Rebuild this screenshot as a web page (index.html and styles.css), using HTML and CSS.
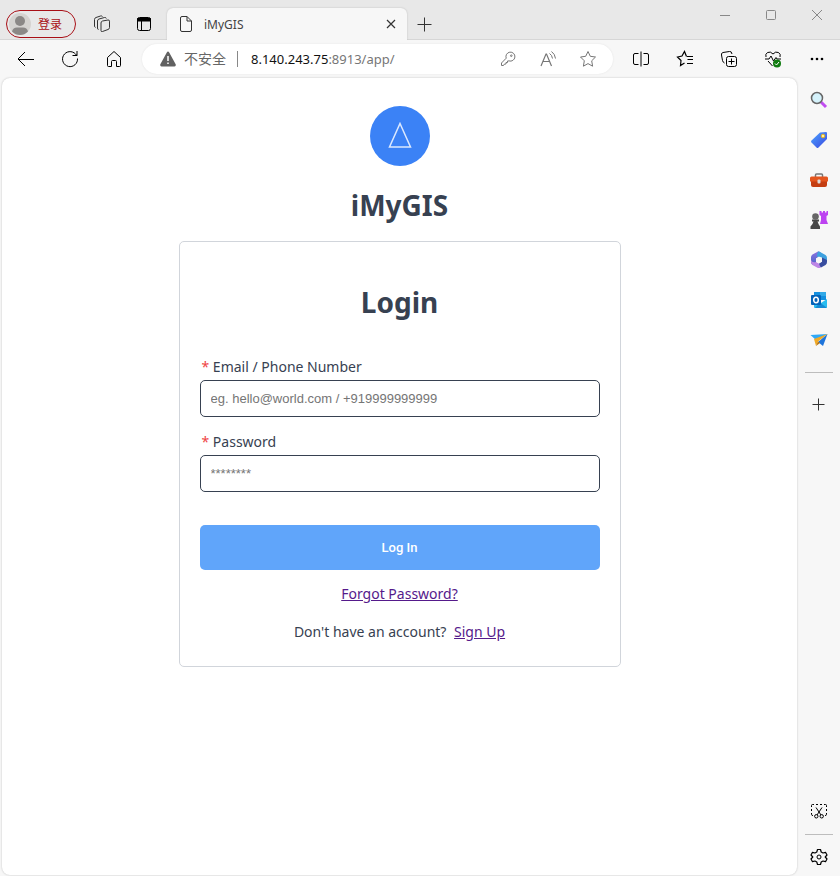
FILE: index.html
```html
<!DOCTYPE html>
<html lang="en">
<head>
<meta charset="utf-8">
<meta name="viewport" content="width=device-width, initial-scale=1">
<title>iMyGIS</title>
<link rel="stylesheet" href="styles.css">
</head>
<body>
<div class="window">
  <header class="titlebar">
    <button class="profile" type="button">
      <svg width="22" height="22" viewBox="0 0 22 22"><circle cx="11" cy="11" r="11" fill="#d5d3d0"/><circle cx="11" cy="8" r="5" fill="#8b8886"/><path d="M3 18.500Q4 14.500 8 14.500H14Q18 14.500 19 18.500Q15.500 22 11 22T3 18.500Z" fill="#8b8886"/></svg>
      <span>登录</span>
    </button>
    <button class="title-btn" type="button" aria-label="Workspaces">
      <svg class="line" width="18" height="18" viewBox="0 0 18 18"><path d="M9.500 6L15 5Q16.500 4.800 16.500 6.200V12.500Q16.500 14 15 14.500L9.500 16.500Q8 17 8 15.500V8Q8 6.400 9.500 6ZM5.500 14.500Q4.500 14.500 4.500 13V6Q4.500 4.500 6 4L11.500 2.500Q13 2.200 13.300 3.500M2.500 12.500Q1.500 12 1.500 11V4.500Q1.500 3 3 2.500L7.500 1Q9 .7 9.500 1.500"/></svg>
    </button>
    <button class="title-btn" type="button" aria-label="Tab actions">
      <svg class="line dark" width="16" height="16" viewBox="0 0 16 16"><rect x="1.500" y="1.500" width="13" height="13" rx="2"/><path d="M1.500 2.500H14.500V5H1.500Z" fill="#000"/><path d="M5.500 5V14.500"/></svg>
    </button>
    <div class="tab">
      <svg class="line" width="14" height="18" viewBox="0 0 14 18"><path d="M3 1.500H8L12.500 6V15Q12.500 16.500 11 16.500H3Q1.500 16.500 1.500 15V3Q1.500 1.500 3 1.500ZM8 1.500V6H12.500"/></svg>
      <span class="tab-title">iMyGIS</span>
      <button type="button" aria-label="Close tab"><svg class="line" width="10" height="10" viewBox="0 0 10 10"><path d="M1 1L9 9M9 1L1 9" stroke-width="1.200"/></svg></button>
    </div>
    <button class="new-tab" type="button" aria-label="New tab"><svg class="line" width="15" height="15" viewBox="0 0 15 15"><path d="M7.500 .5V14.500M.5 7.500H14.500"/></svg></button>
    <div class="controls">
      <button type="button" aria-label="Minimize"><svg class="line" width="12" height="12" viewBox="0 0 12 12"><path d="M1 6.500H11"/></svg></button>
      <button type="button" aria-label="Maximize"><svg class="line" width="12" height="12" viewBox="0 0 12 12"><rect x="1.500" y="1.500" width="9" height="9" rx="1"/></svg></button>
      <button type="button" aria-label="Close"><svg class="line" width="12" height="12" viewBox="0 0 12 12"><path d="M1 1L11 11M11 1L1 11"/></svg></button>
    </div>
  </header>

  <nav class="toolbar" aria-label="Browser">
    <button type="button" aria-label="Back"><svg class="line dark" width="18" height="16" viewBox="0 0 18 16"><path d="M8 1L1 8L8 15M1 8.500H17"/></svg></button>
    <button type="button" aria-label="Refresh"><svg class="line dark" width="18" height="18" viewBox="0 0 18 18"><path d="M16.500 8.500A7.500 7.500 0 1 1 14.500 4L16 5.500M16 1V5.500H11.500"/></svg></button>
    <button type="button" aria-label="Home"><svg class="line dark" width="16" height="18" viewBox="0 0 16 18"><path d="M1.500 7.500L8 1.500L14.500 7.500V15.500Q14.500 16.500 13.500 16.500H10.500V11.500Q10.500 10.500 9.500 10.500H6.500Q5.500 10.500 5.500 11.500V16.500H2.500Q1.500 16.500 1.500 15.500Z"/></svg></button>
    <div class="address">
      <svg width="16" height="16" viewBox="0 0 16 16"><path d="M8 .5Q8.700 .5 9.200 1.500L15.800 13.500Q16 15.500 14.500 15.500H1.500Q0 15.500 .2 13.500L6.800 1.500Q7.300 .5 8 .5Z" fill="#616161"/><path d="M8 5V10M8 11.500V13" stroke="#fff" stroke-width="1.500"/></svg>
      <span class="warning">不安全</span>
      <span class="url"><b>8.140.243.75</b>:8913/app/</span>
      <button type="button" aria-label="Passwords"><svg class="line grey" width="16" height="16" viewBox="0 0 16 16"><path d="M6.200 7.200A4.500 4.500 0 1 1 9 9.900L7.500 10V11.500H6V13H4.500L3.500 14.500H1.500V12Z"/><circle cx="11.300" cy="4.700" r=".8"/></svg></button>
      <button type="button" aria-label="Read aloud"><svg class="line grey" width="18" height="18" viewBox="0 0 18 18"><path d="M2 16L7 4H7.500L12.500 16M4 11.500H10.500" stroke-width="1.200"/><path d="M10.500 3.500Q13 5 13.500 8.500M12.500 1.500Q16 4 16.500 8.500"/></svg></button>
      <button type="button" aria-label="Favorite"><svg class="line grey" width="18" height="18" viewBox="0 0 18 18"><path d="M9 1.500L11.300 6.300L16.500 7L12.700 10.800L13.600 16.200L9 13.600L4.400 16.200L5.300 10.800L1.500 7L6.700 6.300Z"/></svg></button>
    </div>
    <button type="button" aria-label="Split screen"><svg class="line dark" width="16" height="16" viewBox="0 0 16 16"><path d="M5.500 2.500H2Q.5 2.500 .5 4V12Q.5 13.500 2 13.500H5.500M10.500 2.500H14Q15.500 2.500 15.500 4V12Q15.500 13.500 14 13.500H10.500M8 .5V15.500"/></svg></button>
    <button type="button" aria-label="Favorites"><svg class="line dark" width="18" height="18" viewBox="0 0 18 18"><path d="M11 6.500H17M11.500 9.500H17M11 13.500H17M8.500 13L4.500 15.500L5 10.500L1.500 7L6 6L8.500 1.500L10.500 6.500" stroke-width="1.200"/></svg></button>
    <button type="button" aria-label="Collections"><svg class="line dark" width="18" height="18" viewBox="0 0 18 18"><rect x="6.500" y="6.500" width="10" height="10" rx="2"/><path d="M11.500 8.500V14.500M8.500 11.500H14.500M4.500 13Q3 12.500 2.500 10.500L1.500 5Q1 3 3 2.500L9.500 1.500Q11.500 1 12 4"/></svg></button>
    <button type="button" aria-label="Browser essentials"><svg class="line dark" width="18" height="18" viewBox="0 0 18 18"><path d="M2 7Q1 4 3.500 2.500Q6.500 1 9 4Q11.500 1 14.500 2.500Q17 4 16 7M1 9H5L7 6L9.500 11L12 7.500L13 9H17M4 11L8.500 16"/><circle cx="13" cy="13.500" r="4" fill="#107c10" stroke="none"/><path d="M11 13.500L12.500 15L15 12" stroke="#fff"/></svg></button>
    <button type="button" aria-label="Menu"><svg width="16" height="16" viewBox="0 0 16 16"><circle cx="3" cy="8" r="1.300"/><circle cx="8" cy="8" r="1.300"/><circle cx="13" cy="8" r="1.300"/></svg></button>
  </nav>

  <main class="page">
    <div class="logo"><svg width="24" height="28" viewBox="0 0 24 28"><path d="M12 1.500L22.500 25H1.500Z" fill="none" stroke="#dce9fe" stroke-width="1.500"/></svg></div>
    <h1>iMyGIS</h1>
    <form class="card">
      <h2>Login</h2>
      <div class="field">
        <label for="email"><span class="required">*</span> Email / Phone Number</label>
        <input id="email" type="text" placeholder="eg. hello@world.com / +919999999999">
      </div>
      <div class="field">
        <label for="password"><span class="required">*</span> Password</label>
        <input id="password" type="password" placeholder="********">
      </div>
      <button class="submit" type="button">Log In</button>
      <p class="forgot"><a href="#forgot">Forgot Password?</a></p>
      <p class="signup">Don't have an account? <a href="#signup">Sign Up</a></p>
    </form>
  </main>

  <aside class="sidebar" aria-label="Sidebar">
    <button type="button" aria-label="Search"><svg width="18" height="18" viewBox="0 0 18 18"><path d="M11 11L16 16" stroke="#c04df0" stroke-width="3"/><circle cx="7" cy="7" r="5.500" fill="#d5f2fb" stroke="#666" stroke-width="1.500"/></svg></button>
    <button type="button" aria-label="Shopping"><svg width="18" height="18" viewBox="0 0 18 18"><defs><linearGradient id="tag" x2="1" y2="1"><stop stop-color="#4ba4ff"/><stop offset="1" stop-color="#3b48e0"/></linearGradient></defs><path d="M10 1.500L16 1Q17 1 17 2V8L8.500 16.500Q7.500 17.500 6.500 16.500L1.500 11.500Q.5 10.500 1.500 9.500Z" fill="url(#tag)"/><circle cx="13" cy="5" r="1.800" fill="#fff0a0" stroke="#e9b51c"/></svg></button>
    <button type="button" aria-label="Tools"><svg width="18" height="18" viewBox="0 0 18 18"><path d="M5.500 6V4Q5.500 3 6.500 3H11.500Q12.500 3 12.500 4V6" fill="none" stroke="#777" stroke-width="1.500"/><path d="M1 9H17V14Q17 16 15 16H3Q1 16 1 14Z" fill="#c43e12"/><path d="M0 7Q0 5.500 1.500 5.500H16.500Q18 5.500 18 7V10.500H0Z" fill="#e4551e"/><rect x="7.500" y="8.500" width="3" height="4" rx="1" fill="#ddd"/></svg></button>
    <button type="button" aria-label="Games"><svg width="20" height="20" viewBox="0 0 20 20"><path d="M10.500 1H12.500V2.500H14V1H16V2.500H17.500V1H19V5L17.500 6V10L19 14H11L12 10V6L10.500 5Z" fill="#bd43f1"/><circle cx="6.500" cy="6.500" r="3.300" fill="#666"/><path d="M3 9.500H10V11.500H8.500L9.500 14L11 16.500V19H1.500V16.500L3.500 14L4.500 11.500H3Z" fill="#484848"/></svg></button>
    <button type="button" aria-label="Microsoft 365"><svg width="18" height="18" viewBox="0 0 18 18"><defs><linearGradient id="office" x2="0" y2="1"><stop stop-color="#8d72df"/><stop offset="1" stop-color="#4965c8"/></linearGradient></defs><path d="M8 .5Q10 0 11 2L12 4.500L6 7.500V12L3 14Q1 13 1 11V6Q1 4.500 2.500 3.500Z" fill="url(#office)"/><path d="M8 .5Q9.500 .3 11 1.500L15.500 4Q17 5 17 7V11L12 9V6.500L6.500 5.500Z" fill="#3da1df"/><path d="M1 9Q2 12 6 11L9 12.500L12 10.500L14.500 13.500L10.500 16.500Q9 17.500 7 16.500L2.500 14Q1 13 1 11Z" fill="#bd86e6"/><path d="M12 6.500L17 9V11Q17 13 15.500 14L11 16.500Q10 16 9 12.500L12 10.500Z" fill="#384d9f"/><path d="M9 5.500L12 7.500V10.700L9 12.500L6 10.700V7.500Z" fill="#f7f7f7"/></svg></button>
    <button type="button" aria-label="Outlook"><svg width="18" height="18" viewBox="0 0 18 18"><path d="M4 1H15Q16 1 16 2V9H4Z" fill="#1490df"/><path d="M10 1H16V5H10Z" fill="#32a9e7"/><path d="M4 8L11 12L17 8V16Q17 17 16 17H5Q4 17 4 16Z" fill="#28bdf0"/><path d="M10 11.500L17 17H5Z" fill="#168bd4"/><rect x="1" y="4" width="10" height="10" rx="1" fill="#0563b8"/><ellipse cx="6" cy="9" rx="2.300" ry="2.800" fill="none" stroke="#fff" stroke-width="1.500"/></svg></button>
    <button type="button" aria-label="Drop"><svg width="18" height="18" viewBox="0 0 18 18"><path d="M.5 4L17.500 3L7 10Z" fill="#31a8f5"/><path d="M17.500 3L13 15L8 11Z" fill="#1f75db"/><path d="M17.500 3L4 8L6 15L8 10.500Z" fill="#f2aa24"/><path d="M6 15L8 10.500L10 12Z" fill="#b97612"/></svg></button>
    <hr>
    <button type="button" aria-label="Customize"><svg class="line" width="13" height="13" viewBox="0 0 13 13"><path d="M6.500 .5V12.500M.5 6.500H12.500"/></svg></button>
    <div class="sidebar-end">
      <button type="button" aria-label="Screenshot"><svg class="line dark" width="18" height="18" viewBox="0 0 18 18"><path d="M1.500 5V3.500Q1.500 2.500 2.500 2.500H4M6 2.500H8M10 2.500H12M14 2.500H15.500Q16.500 2.500 16.500 3.500V5M1.500 7V9M16.500 7V9M1.500 11V12.500Q1.500 13.500 3 13.500M16.500 11V12.500Q16.500 13.500 15 13.500M6 5.500L11 13M12 5.500L7 13"/><circle cx="6.300" cy="14.300" r="1.700"/><circle cx="11.700" cy="14.300" r="1.700"/></svg></button>
      <hr>
      <button type="button" aria-label="Settings"><svg class="line dark" width="18" height="18" viewBox="0 0 18 18"><path d="M7.500 1.500H10.500L11.200 4L13 5L15.500 4.300L17 7L15.200 9L17 11L15.500 13.700L13 13L11.200 14L10.500 16.500H7.500L6.800 14L5 13L2.500 13.700L1 11L2.800 9L1 7L2.500 4.300L5 5L6.800 4Z" stroke-linejoin="round" stroke-width="1.200"/><circle cx="9" cy="9" r="2"/></svg></button>
    </div>
  </aside>
</div>
</body>
</html>
```

FILE: styles.css
```css
* {
  box-sizing: border-box;
}

body {
  margin: 0;
  color: #374151;
  font-family: "Noto Sans", "Noto Sans CJK SC", sans-serif;
  font-size: 14px;
}

button {
  display: flex;
  align-items: center;
  justify-content: center;
  padding: 0;
  border: 0;
  background: none;
  font-family: inherit;
}

svg {
  flex: none;
}

.line {
  fill: none;
  stroke: #333;
}

.dark {
  stroke: #000;
}

.grey {
  stroke: #767676;
}

.window {
  display: grid;
  grid-template: 40px 38px 1fr / 1fr 43px;
  min-height: 100vh;
  background: #f7f7f7;
}

/* Title bar */
.titlebar {
  grid-column: 1 / -1;
  display: flex;
  align-items: flex-end;
  padding-left: 6px;
  background: #e8e8e8;
  box-shadow: inset 0 -1px #d6d6d6;
}

.profile {
  justify-content: flex-start;
  width: 70px;
  height: 28px;
  margin: 0 5px 2px 0;
  padding-left: 2px;
  gap: 7px;
  border: 1px solid #a80f16;
  border-radius: 14px;
  color: #a80f16;
  font-size: 12px;
}

.title-btn {
  width: 42px;
  height: 32px;
}

.tab {
  display: flex;
  align-items: center;
  flex: 0 1 240px;
  height: 32px;
  margin-left: 2px;
  padding: 0 6px 0 12px;
  gap: 11px;
  border-radius: 6px 6px 0 0;
  background: #f7f7f7;
  box-shadow: 0 0 2px #bbb;
  clip-path: inset(-3px -3px 0);
}

.tab-title {
  flex: 1;
  color: #444;
  font-size: 12px;
}

.tab button {
  width: 20px;
  height: 20px;
}

.new-tab {
  width: 34px;
  height: 32px;
}

.controls {
  display: flex;
  align-self: flex-start;
  margin-left: auto;
}

.controls button {
  width: 46px;
  height: 30px;
}

.controls .line {
  stroke: #888;
}

/* Toolbar */
.toolbar {
  grid-column: 1 / -1;
  display: flex;
  align-items: center;
  padding: 0 1px 0 4px;
}

.toolbar > button {
  width: 44px;
  height: 36px;
}

.address {
  display: flex;
  align-items: center;
  flex: 1;
  height: 30px;
  margin: 0 6px;
  padding: 0 5px 0 18px;
  border-radius: 15px;
  background: #fff;
  box-shadow: 0 0 2px #e2e2e2;
}

.warning {
  margin-left: 8px;
  padding-right: 11px;
  border-right: 1px solid #888;
  color: #666;
  line-height: 16px;
}

.url {
  flex: 1;
  padding-left: 13px;
  color: #767676;
  font-size: 13px;
}

.url b {
  color: #111;
  font-weight: 400;
}

.address button {
  width: 40px;
  height: 30px;
}

/* Login page */
.page {
  display: flex;
  flex-direction: column;
  align-items: center;
  margin: 0 0 1px 2px;
  padding: 28px 20px;
  border-radius: 8px;
  background: #fff;
  box-shadow: 0 0 2px #bbb;
}

.logo {
  display: flex;
  align-items: center;
  justify-content: center;
  width: 60px;
  height: 60px;
  border-radius: 50%;
  background: #3b82f6;
}

h1,
h2 {
  font-size: 28px;
  line-height: 40px;
  text-align: center;
}

h1 {
  margin: 19px 0 16px;
}

h2 {
  margin: 20px 0 33px;
}

.card {
  width: 100%;
  max-width: 442px;
  padding: 20px 20px 22px;
  border: 1px solid #d1d5db;
  border-radius: 5px;
}

.field {
  display: flex;
  flex-direction: column;
  gap: 1px;
  margin-bottom: 13px;
}

.field label {
  padding-left: 2px;
  line-height: 24px;
}

.required {
  color: #ef4444;
}

.field input {
  width: 100%;
  height: 37px;
  padding: 0 10px;
  border: 1px solid #374151;
  border-radius: 5px;
  background: #fff;
  font-family: "Liberation Sans", sans-serif;
  font-size: 13px;
}

.field input::placeholder {
  color: #757575;
}

.submit {
  width: 100%;
  height: 45px;
  margin-top: 33px;
  border-radius: 5px;
  background: #60a5fa;
  color: #fff;
  font-family: Roboto, sans-serif;
  font-size: 13px;
  font-weight: 500;
}

.card p {
  margin: 12px 0 0;
  line-height: 24px;
  text-align: center;
}

.card .signup {
  margin-top: 14px;
}

.signup a {
  margin-left: 4px;
}

.card a {
  color: #551a8b;
}

/* Sidebar */
.sidebar {
  display: flex;
  flex-direction: column;
  align-items: center;
  padding-top: 2px;
}

.sidebar button {
  width: 40px;
  height: 40px;
}

.sidebar hr {
  width: 28px;
  height: 1px;
  margin: 12px 0 11px;
  border: 0;
  background: #bdbdbd;
}

.sidebar-end {
  display: flex;
  flex-direction: column;
  align-items: center;
  margin-top: auto;
}

.sidebar-end hr {
  margin: 3px 0 2px;
}

.sidebar-end button:last-child {
  height: 39px;
}
```
